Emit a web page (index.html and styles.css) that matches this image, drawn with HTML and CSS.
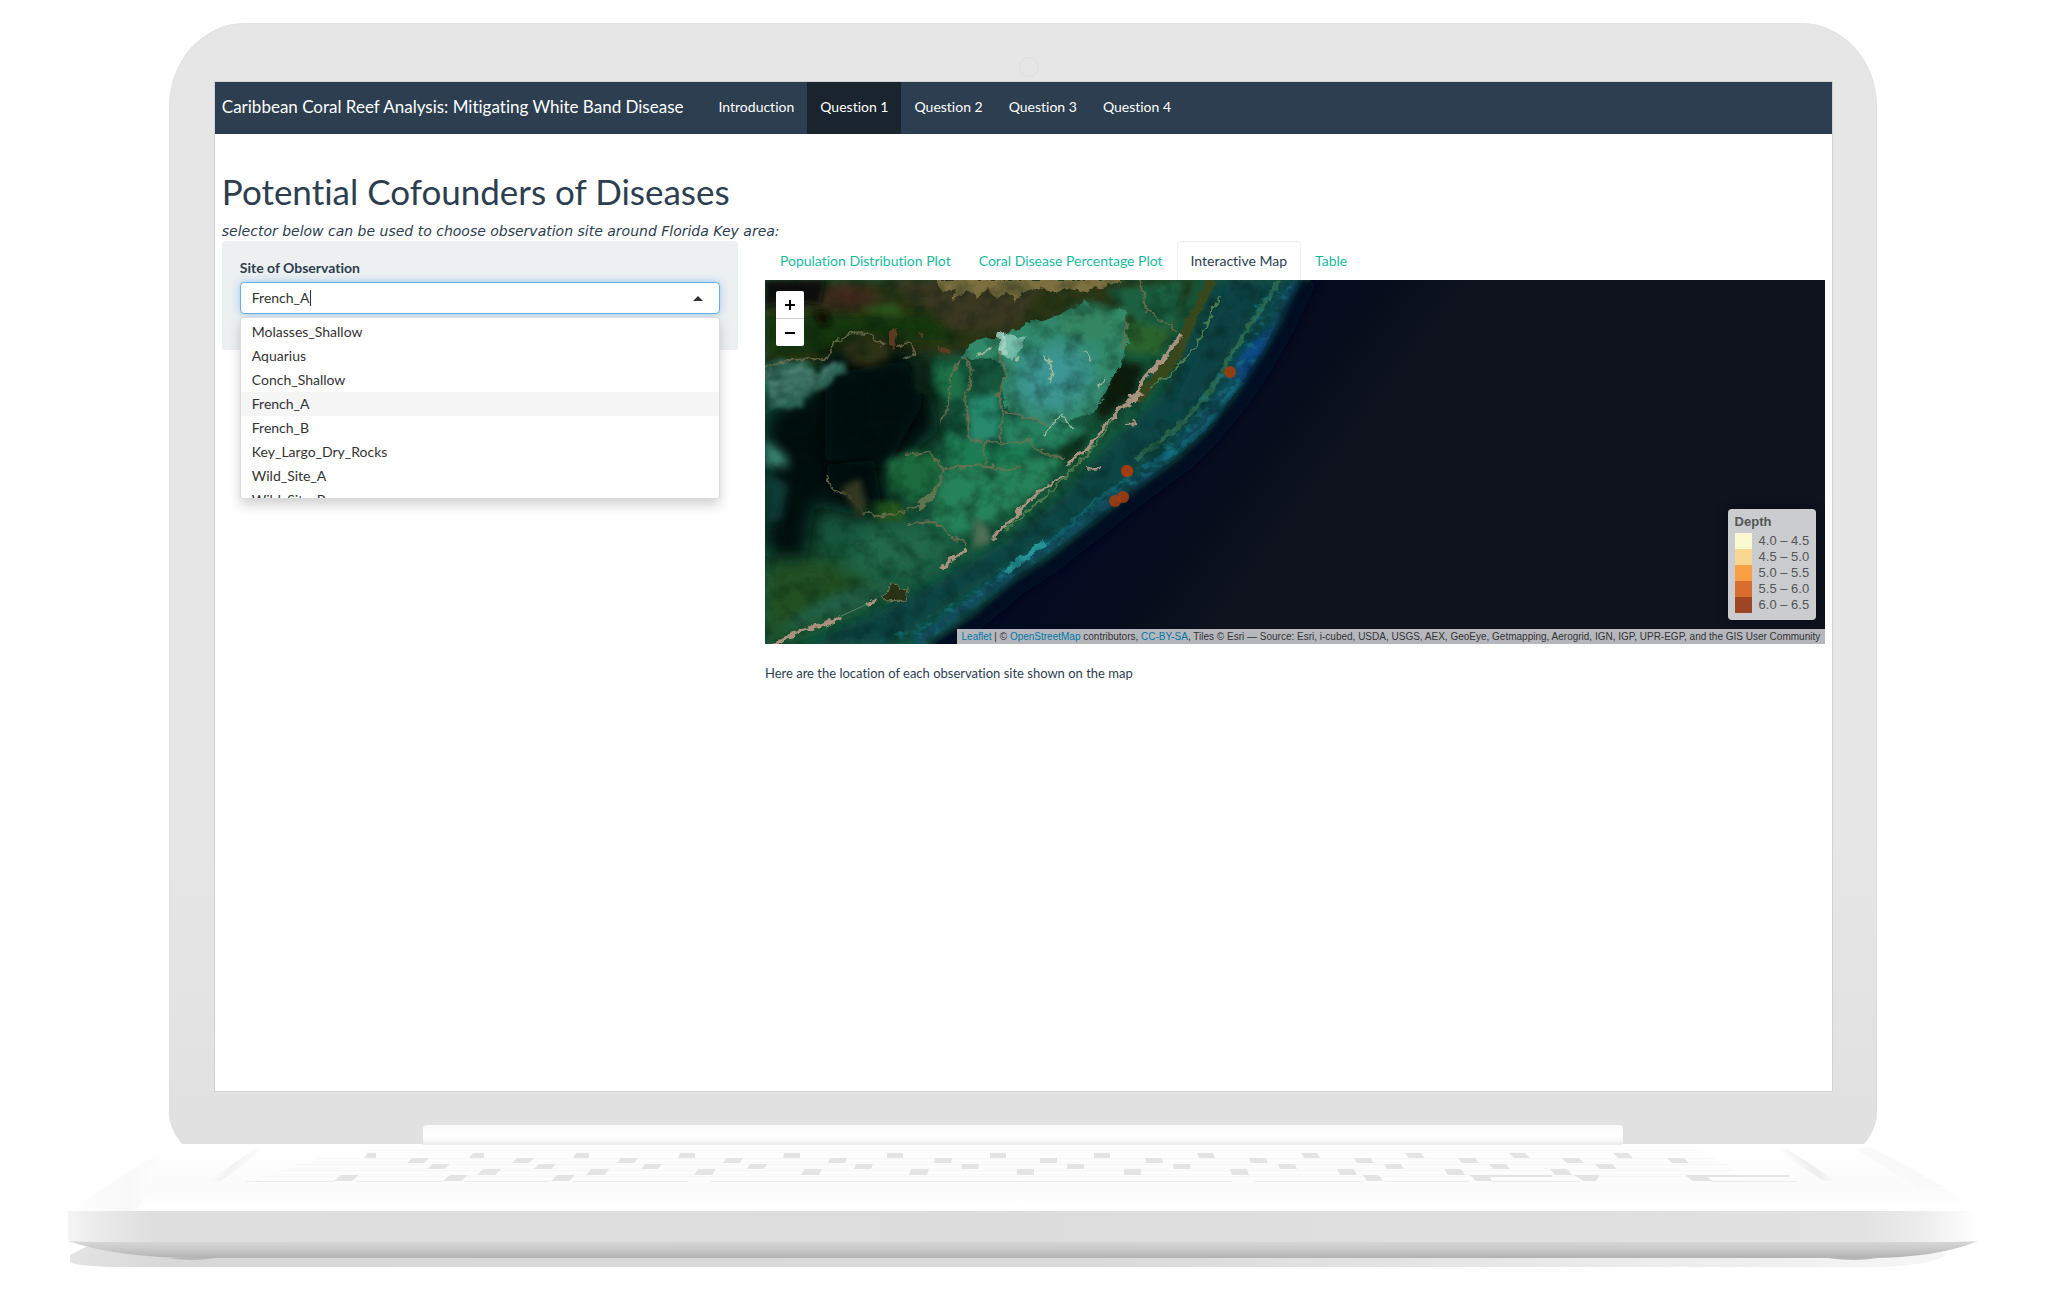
FILE: index.html
```html
<!DOCTYPE html>
<html lang="en">
<head>
<meta charset="utf-8">
<title>Caribbean Coral Reef Analysis</title>
<link rel="stylesheet" href="styles.css">
</head>
<body>
<div class="laptop">
  <div class="lid">
    <span class="camera"></span>
    <div class="screen">
      <nav class="navbar">
        <a class="brand" href="#">Caribbean Coral Reef Analysis: Mitigating White Band Disease</a>
        <a class="nav-link" href="#">Introduction</a>
        <a class="nav-link active" href="#">Question 1</a>
        <a class="nav-link" href="#">Question 2</a>
        <a class="nav-link" href="#">Question 3</a>
        <a class="nav-link" href="#">Question 4</a>
      </nav>
      <main class="content">
        <h1>Potential Cofounders of Diseases</h1>
        <p class="hint">selector below can be used to choose observation site around Florida Key area:</p>
        <div class="columns">
          <form class="well">
            <label for="site">Site of Observation</label>
            <div class="picker">
              <div class="control">
                <span class="item">French_A</span>
                <input id="site" type="text" autocomplete="off">
                <span class="arrow"></span>
              </div>
              <ul class="options">
                <li>Molasses_Shallow</li>
                <li>Aquarius</li>
                <li>Conch_Shallow</li>
                <li class="selected">French_A</li>
                <li>French_B</li>
                <li>Key_Largo_Dry_Rocks</li>
                <li>Wild_Site_A</li>
                <li>Wild_Site_B</li>
              </ul>
            </div>
          </form>
          <section class="results">
            <div class="tabs">
              <a href="#">Population Distribution Plot</a>
              <a href="#">Coral Disease Percentage Plot</a>
              <a class="active" href="#">Interactive Map</a>
              <a href="#">Table</a>
            </div>
            <div class="map">
              <svg class="tiles" viewBox="0 0 1060 364" preserveAspectRatio="xMinYMin slice" aria-hidden="true">
                <defs>
                  <filter id="b2" x="-20%" y="-20%" width="140%" height="140%"><feGaussianBlur stdDeviation="3"/></filter>
                  <filter id="b5" x="-30%" y="-30%" width="160%" height="160%"><feGaussianBlur stdDeviation="5"/></filter>
                  <filter id="b12" x="-50%" y="-50%" width="200%" height="200%"><feGaussianBlur stdDeviation="10"/></filter>
                  <filter id="rough" x="-10%" y="-10%" width="120%" height="120%">
                    <feTurbulence type="fractalNoise" baseFrequency=".12" numOctaves="3" seed="4" result="n"/>
                    <feDisplacementMap in="SourceGraphic" in2="n" scale="9" xChannelSelector="R" yChannelSelector="G"/>
                    <feGaussianBlur stdDeviation=".7"/>
                  </filter>
                  <filter id="swirl" x="-20%" y="-20%" width="140%" height="140%">
                    <feTurbulence type="fractalNoise" baseFrequency=".03" numOctaves="4" seed="9" result="n"/>
                    <feDisplacementMap in="SourceGraphic" in2="n" scale="30" xChannelSelector="R" yChannelSelector="G"/>
                    <feGaussianBlur stdDeviation="2"/>
                  </filter>
                  <filter id="mottle" x="0" y="0" width="100%" height="100%">
                    <feTurbulence type="fractalNoise" baseFrequency=".05" numOctaves="5" seed="21"/>
                    <feColorMatrix values="0 0 0 0 0  0 0 0 0 .01  0 0 0 0 .005  2.2 0 0 0 -.95"/>
                  </filter>
                  <filter id="glint" x="0" y="0" width="100%" height="100%">
                    <feTurbulence type="fractalNoise" baseFrequency=".1 .14" numOctaves="4" seed="33"/>
                    <feColorMatrix values="0 0 0 0 .01  0 0 0 0 .2  0 0 0 0 .26  0 3.4 0 0 -1.75"/>
                    <feGaussianBlur stdDeviation=".6"/>
                  </filter>
                  <linearGradient id="sea" gradientUnits="userSpaceOnUse" x1="360" y1="220" x2="480" y2="310">
                    <stop offset="0" stop-color="#040a20"/><stop offset=".5" stop-color="#080d1d"/><stop offset="1" stop-color="#0e131e"/>
                  </linearGradient>
                  <clipPath id="shelf"><path d="M0 0H545L523 42 503 78 477 117 450 150 423 180 378 213 338 244 288 283 255 303 217 335 172 364H0Z"/></clipPath>
                  <clipPath id="reef"><path d="M500 0H535L513 42 493 78 467 117 440 150 413 177 368 208 330 238 280 277 247 297 207 329 160 364H110L210 310 310 240 410 150 470 70Z"/></clipPath>
                </defs>
                <rect width="1060" height="364" fill="url(#sea)"/>
                <g clip-path="url(#shelf)">
                  <rect width="560" height="364" fill="#16563c"/>
                  <path d="M0 0H430L400 60 250 70 180 75 60 85H0Z" fill="#2b3519" filter="url(#b5)"/>
                  <path d="M0 36 80 36 170 35 190 60 100 60 60 72 0 75Z" fill="#183710" filter="url(#b5)"/>
                  <path d="M120 0H280L250 48 190 50 150 20Z" fill="#3a3822" filter="url(#b5)"/>
                  <ellipse cx="82" cy="18" rx="30" ry="13" fill="#40291a" filter="url(#b5)"/>
                  <path d="M0 0H60L55 25 20 20 0 28Z" fill="#080f08" filter="url(#b2)"/>
                  <path d="M48 32 62 30 66 44 55 46Z" fill="#090f06" filter="url(#b2)"/>
                  <path d="M95 28 130 24 140 36 110 34Z" fill="#2c541a" filter="url(#b2)"/>
                  <path d="M168 0 178 12 190 8 186 20 202 10 212 17 222 8 232 19 244 10 250 21 262 11 278 8 290 14 302 8 320 11 340 7 358 0Z" fill="#7d7040" filter="url(#rough)"/>
                  <path d="M55 76 100 60 150 75 165 110 175 150 150 170 110 195 140 230 90 235 50 225 40 290 0 275V130L50 110Z" fill="#05110c" filter="url(#b12)"/>
                  <path d="M60 95 140 80 160 120 120 190 60 180Z" fill="#060f08" filter="url(#b12)"/>
                  <path d="M60 185 110 180 116 225 70 215Z" fill="#06110a" filter="url(#b5)"/>
                  <ellipse cx="102" cy="71" rx="24" ry="15" fill="#2f3216" filter="url(#b5)"/>
                  <path d="M0 88 40 84 85 82 75 98 48 112 30 128 0 130Z" fill="#2f6656" filter="url(#swirl)"/>
                  <path d="M0 94 70 86M0 104 60 94M2 112 50 104M8 124 38 112" stroke="#6b988a" stroke-width="3" fill="none" filter="url(#swirl)" opacity=".7"/>
                  <path d="M0 158 22 176 24 188 0 186Z" fill="#39816f" filter="url(#b5)"/>
                  <path d="M0 190 24 205 16 240 0 245Z" fill="#0b3b34" filter="url(#b5)"/>
                  <path d="M0 285 70 280 120 305 80 330 0 364Z" fill="#244f20" filter="url(#b12)"/>
                  <path d="M105 245 170 250 190 275 130 300 80 290Z" fill="#22694c" filter="url(#b12)"/>
                  <path d="M60 318 130 298 110 320 40 344 10 350Z" fill="#206049" filter="url(#b5)"/>
                  <path d="M108 222 135 222 140 240 112 240Z" fill="#28581c" filter="url(#b2)"/>
                  <g filter="url(#b2)">
                    <path d="M170 85 195 85 200 115 185 120 168 105Z" fill="#1e7147"/>
                    <path d="M203 118 232 112 235 160 205 162Z" fill="#25896d"/>
                    <path d="M236 135 280 140 320 150 300 170 240 165Z" fill="#25825f"/>
                    <path d="M180 150 205 162 265 165 260 185 185 190Z" fill="#1c7b52"/>
                    <path d="M122 180 150 170 176 178 174 205 150 222 125 210Z" fill="#1a6b3e"/>
                    <path d="M180 190 250 182 300 175 280 205 230 240 190 255 165 240Z" fill="#268258"/>
                    <path d="M340 10 420 0 410 50 375 45Z" fill="#1d6040"/>
                    <path d="M320 20 362 30 358 50 330 40Z" fill="#2d7650"/>
                    <path d="M358 40 405 50 395 75 360 72Z" fill="#2a632f"/>
                    <path d="M350 80 380 85 368 115 335 142 330 125Z" fill="#071b0c"/>
                    <path d="M290 168 325 150 318 168 298 185Z" fill="#10301a"/>
                    <path d="M148 80 166 78 170 120 150 110Z" fill="#0b2412"/>
                  </g>
                  <g filter="url(#rough)">
                    <path d="M196 78 205 62 225 58 242 54 262 42 290 36 320 22 336 32 362 28 362 66 352 90 342 110 330 132 300 142 285 148 260 138 240 130 236 110 240 90 230 80Z" fill="#32896a"/>
                    <path d="M242 55 260 57 258 68 245 80 232 70Z" fill="#7cc2ae"/>
                    <path d="M232 55 240 52 242 76 235 74Z" fill="#a5d6c4"/>
                  </g>
                  <path d="M248 80 300 60 330 80 325 112 300 132 255 125Z" fill="#3c9694" filter="url(#b12)"/>
                  <path d="M310 26 355 35 345 60 290 50Z" fill="#368562" filter="url(#b5)"/>
                  <path d="M450 0H530L505 40 470 100 420 150 350 210 260 275 190 320 130 364H40L110 334 180 298 240 262 300 215 345 165 400 110Z" fill="#0e4544" filter="url(#b5)"/>
                  <path d="M465 0 500 0 480 50 440 110 400 142 440 60Z" fill="#0f4344" filter="url(#b5)"/>
                  <path d="M532 0 505 52 480 90 430 150 380 195 300 255 220 312 150 364" fill="none" stroke="#0c4a6c" stroke-width="10" filter="url(#b5)"/>
                  <path d="M510 44 485 62 470 85 478 108 498 72Z" fill="#0c4c8a" filter="url(#b2)"/>
                  <g fill="none" filter="url(#rough)">
                    <path d="M514 0 492 35 468 72 445 112 415 145 370 180" stroke="#2a674d" stroke-width="5"/>
                    <path d="M476 100 446 142 416 168 378 188" stroke="#147489" stroke-width="6" opacity=".7"/>
                    <path d="M368 194 330 222 285 262 235 292" stroke="#176d7c" stroke-width="4" opacity=".6"/>
                    <path d="M280 262 240 293" stroke="#25989a" stroke-width="6"/>
                  </g>
                  <rect width="560" height="364" filter="url(#mottle)" opacity=".42"/>
                  <g clip-path="url(#reef)"><rect width="560" height="364" filter="url(#glint)" opacity=".6"/></g>
                  <path d="M447 0 425 42 410 78 385 105 372 120" fill="none" stroke="#37471f" stroke-width="10" filter="url(#rough)"/>
                  <path d="M455 15 432 65 405 95 385 107M348 140 325 172 290 208 240 250" fill="none" stroke="#4d7b4c" stroke-width="2" filter="url(#rough)"/>
                  <g fill="none" stroke="#75704f" stroke-width="2" filter="url(#rough)" opacity=".8">
                    <path d="M0 88 25 80 60 79 70 62 85 53 105 54 118 66"/>
                    <path d="M132 66 145 62 150 75 140 80"/>
                    <path d="M200 78 208 95 200 115 202 140 205 160 240 162 265 160 270 170 300 178"/>
                    <path d="M236 72 240 95 233 115 238 133 235 160M238 132 262 138 285 146"/>
                    <path d="M140 175 165 172 178 190 200 186 218 184 240 190 255 186M218 162 220 184"/>
                    <path d="M180 188 172 210 158 222 142 232M142 244 170 242 190 258 202 265"/>
                    <path d="M60 196 66 208 90 218 97 232 112 236 140 232"/>
                    <path d="M195 78 185 100 184 125 176 142"/>
                    <path d="M375 0 380 28 394 40 412 52"/>
                    <path d="M361 40 358 70"/>
                  </g>
                  <path d="M156 220 172 206 168 220 150 232Z" fill="#61744f" filter="url(#rough)"/>
                  <path d="M124 52 132 50 130 70 124 64ZM150 55 158 53 158 58ZM170 66 186 70 180 76Z" fill="#5d3b20" filter="url(#rough)"/>
                  <g fill="none" stroke="#9ab79b" stroke-width="2" filter="url(#rough)">
                    <path d="M252 75 253 82M280 75 287 90 284 104M280 155 290 140 296 134 306 146 308 148M212 76 227 68M320 70 326 82M334 108 340 98"/>
                  </g>
                  <g fill="none" stroke="#a8937f" filter="url(#rough)">
                    <path d="M416 54 404 70 397 82 386 90 375 103 372 118 357 127" stroke-width="4"/>
                    <path d="M396 80 386 92M374 112 366 120" stroke-width="7"/>
                    <path d="M357 127 342 143 323 167 307 180 303 188" stroke-width="3"/>
                    <path d="M326 165 318 172" stroke-width="6"/>
                    <path d="M298 196 277 210 262 223 247 239 227 259" stroke-width="3"/>
                    <path d="M203 268 190 278 175 288" stroke-width="3"/>
                    <path d="M102 324 112 320M76 336 60 345 40 349 24 357 6 366" stroke-width="4"/>
                    <path d="M360 145 370 144 368 139M320 190 335 188" stroke-width="2"/>
                  </g>
                  <path d="M210 238 222 246 226 262 208 268Z" fill="#4f6f56" filter="url(#b2)"/>
                  <path d="M75 208 95 198 102 225 95 240 85 222Z" fill="#303821" filter="url(#b2)"/>
                  <path d="M116 316 128 304 142 310 140 320 122 321Z" fill="#2b3217" stroke="#76764f" filter="url(#rough)"/>
                  <path d="M102 324 76 336" stroke="#5e8074"/>
                </g>
                <path d="M544 0 522 46 502 82 476 121 448 155 420 183 375 216 336 247 286 286 252 308 214 340 170 370" fill="none" stroke="#040b24" stroke-width="16" filter="url(#b2)"/>
                <g fill="#a83c0c" fill-opacity=".85">
                  <circle cx="465" cy="92" r="6"/><circle cx="362" cy="191" r="6"/><circle cx="362" cy="191" r="6"/><circle cx="358" cy="217" r="6"/><circle cx="350" cy="221" r="6"/>
                </g>
              </svg>
              <div class="zoom">
                <button type="button" aria-label="Zoom in"><svg viewBox="0 0 12 12"><path d="M6 1V11M1 6H11"/></svg></button>
                <button type="button" aria-label="Zoom out"><svg viewBox="0 0 12 12"><path d="M1 6H11"/></svg></button>
              </div>
              <div class="legend">
                <strong>Depth</strong>
                <ul>
                  <li><i class="d1"></i>4.0 – 4.5</li>
                  <li><i class="d2"></i>4.5 – 5.0</li>
                  <li><i class="d3"></i>5.0 – 5.5</li>
                  <li><i class="d4"></i>5.5 – 6.0</li>
                  <li><i class="d5"></i>6.0 – 6.5</li>
                </ul>
              </div>
              <div class="attribution"><a href="#">Leaflet</a> | © <a href="#">OpenStreetMap</a> contributors, <a href="#">CC-BY-SA</a>, Tiles © Esri — Source: Esri, i-cubed, USDA, USGS, AEX, GeoEye, Getmapping, Aerogrid, IGN, IGP, UPR-EGP, and the GIS User Community</div>
            </div>
            <p class="caption">Here are the location of each observation site shown on the map</p>
          </section>
        </div>
      </main>
    </div>
  </div>
  <svg class="base" viewBox="0 0 1910 142" aria-hidden="true">
    <defs>
      <linearGradient id="deck" x1="0" x2="0" y1="0" y2="1"><stop offset="0" stop-color="#fff"/><stop offset=".65" stop-color="#fbfbfb"/><stop offset="1" stop-color="#fff"/></linearGradient>
      <linearGradient id="hinge" x1="0" x2="0" y1="0" y2="1"><stop offset="0" stop-color="#fafafa"/><stop offset=".5" stop-color="#fff"/><stop offset=".75" stop-color="#fafafa"/><stop offset="1" stop-color="#ebebeb"/></linearGradient>
      <linearGradient id="front"><stop offset="0" stop-color="#f5f5f5"/><stop offset=".02" stop-color="#e8e8e8"/><stop offset=".045" stop-color="#dedede"/><stop offset=".5" stop-color="#dcdcdc"/><stop offset=".94" stop-color="#e2e2e2"/><stop offset=".97" stop-color="#ececec"/><stop offset="1" stop-color="#fff"/></linearGradient>
      <linearGradient id="under" x1="0" x2="0" y1="0" y2="1"><stop offset="0" stop-color="#d8d8d8"/><stop offset=".5" stop-color="#c8c8c8"/><stop offset="1" stop-color="#b2b2b2"/></linearGradient>
      <linearGradient id="shadow"><stop offset="0" stop-color="#e4e4e4"/><stop offset=".05" stop-color="#d8d8d8"/><stop offset=".55" stop-color="#dadada"/><stop offset="1" stop-color="#f6f6f6"/></linearGradient>
      <linearGradient id="wingl" x1="0" x2="1"><stop offset="0" stop-color="#fff"/><stop offset=".6" stop-color="#f8f8f8"/><stop offset="1" stop-color="#fff"/></linearGradient>
      <linearGradient id="slotl" x1="0" y1="0" x2="1" y2=".4"><stop offset=".3" stop-color="#fff"/><stop offset=".55" stop-color="#f2f2f2"/><stop offset=".8" stop-color="#fff"/></linearGradient>
      <linearGradient id="slotr" x1="1" y1="0" x2="0" y2=".4"><stop offset=".3" stop-color="#fff"/><stop offset=".55" stop-color="#eee"/><stop offset=".8" stop-color="#fff"/></linearGradient>
      <linearGradient id="keyrow" x1="0" x2="0" y1="0" y2="1"><stop offset="0" stop-color="#f5f5f5"/><stop offset=".5" stop-color="#fff"/><stop offset="1" stop-color="#f8f8f8"/></linearGradient>
    </defs>
    <path d="M2 130 25 118H1860L1878 130Q1860 142 1800 142H60Q10 142 2 137Z" fill="url(#shadow)"/>
    <path d="M101 19H1809L1910 86H0Z" fill="url(#deck)"/>
    <path d="M101 22 0 86H68L102 24Z" fill="url(#wingl)"/>
    <path d="M1802 22 1876 62 1850 62 1788 24Z" fill="#f9f9f9"/>
    <path d="M187 24 140 56H152L200 24Z" fill="url(#slotl)"/>
    <path d="M1719 24 1769 56H1756L1706 24Z" fill="url(#slotr)"/>
    <g fill="url(#keyrow)">
      <path d="M298 25H1630L1635 28H294Z"/><path d="M250 33H1645L1652 38H243Z"/><path d="M228 39H1658L1663 44H221Z"/><path d="M212 45H1664L1672 50H205Z"/><path d="M194 51H1674L1680 56H185Z"/>
    </g>
    <path d="M178 56.500H266M288 56.500H375M396 56.500H482M505 56.500H620M642 56.500H1164M1186 56.500H1295M1317 56.500H1402M1424 56.500H1512M1643 56.500H1730" stroke="#ededed" fill="none"/>
    <g fill="#e4e4e4">
      <path d="M300 28h8v5h-12zM405 28h11v5h-15zM508 28h13v5h-16zM612 28h15v5h-17zM716 28h16v5h-17zM819 28h16v5h-16zM922 28h16v5h-16zM1026 28h16v5h-16zM1129 28h16l2 5h-16zM1233 28h16l3 5h-16zM1337 28h16l4 5h-16zM1441 28h16l5 5h-16zM1545 28h15l5 5h-15z"/>
      <path d="M344 33h17l-5 5h-17zM449 33h17l-5 5h-17zM553 33h17l-4 5h-17zM658 33h17l-3 5h-17zM762 33h17l-2 5h-17zM867 33h17l-1 5h-17zM972 33h17v5h-17zM1077 33h17l1 5h-17zM1181 33h17l2 5h-17zM1286 33h17l3 5h-17zM1390 33h17l4 5h-17zM1494 33h17l5 5h-17zM1599 33h17l5 5h-17z"/>
      <path d="M365 39h17l-6 5h-17zM471 39h17l-5 5h-17zM577 39h17l-4 5h-17zM682 39h17l-3 5h-17zM788 39h17l-2 5h-17zM894 39h17l-1 5h-17zM999 39h17v5h-17zM1105 39h17l1 5h-17zM1210 39h17l2 5h-17zM1316 39h17l3 5h-17zM1421 39h17l4 5h-17zM1527 39h17l5 5h-17z"/>
      <path d="M415 44h18l-6 6h-18zM523 44h18l-5 6h-18zM630 44h18l-4 6h-18zM736 44h18l-3 6h-18zM843 44h18l-2 6h-18zM949 44h17v6h-17zM1056 44h17v6h-17zM1162 44h17l2 6h-17zM1269 44h17l3 6h-17zM1376 44h17l4 6h-17zM1482 44h17l5 6h-17z"/>
      <path d="M273 50h18l-7 6h-18zM382 50h18l-7 6h-18zM489 50h18l-6 6h-18zM1295 50h16l4 6h-16zM1402 50h82v2h-62l2 4h-16zM1505 50h27l-4 6h-12zM1617 50h104v2h-82l6 4h-20z"/>
    </g>
    <path d="M355 20V3Q355 0 360 0H1550Q1555 0 1555 3V20Z" fill="url(#hinge)"/>
    <path d="M0 86H1910V117H0Z" fill="url(#front)"/>
    <path d="M0 116Q8 117 50 117H1860Q1900 117 1910 116 1870 133 1800 133H130Q50 133 0 116Z" fill="url(#under)"/>
    <path d="M100 133H148Q124 137 100 133ZM1760 133H1810Q1786 137 1760 133Z" fill="#b8b8b8"/>
  </svg>
</div>
</body>
</html>
```
FILE: styles.css
```css
* { box-sizing: border-box; }

body {
  margin: 0;
  padding: 23px 0;
  background: #fff;
  color: #2c3e50;
  font: 14px/20px Lato, sans-serif;
  font-variant-ligatures: none;
}

h1, p, ul { margin: 0; padding: 0; font-weight: 400; }
ul { list-style: none; }
a { text-decoration: none; }

/* Laptop frame */
.laptop { display: flex; flex-direction: column; align-items: center; }

.lid {
  position: relative;
  width: 83.5%;
  padding: 59px 45px 98px 46px;
  border-radius: 76px 76px 145px 145px / 84px 84px 77px 77px;
  background: linear-gradient(#e6e6e6 70%, #e0e0e0);
  box-shadow: inset 0 0 2px #dadada;
}

.camera {
  position: absolute;
  top: 34px;
  left: calc(50% - 4px);
  width: 20px;
  height: 20px;
  border: 1px solid #dedede;
  border-radius: 50%;
}

.screen {
  aspect-ratio: 1617 / 1009;
  background: #fff;
  box-shadow: 0 0 0 1px #d2d2d2;
}

.base { display: block; width: 93.35%; margin-top: -64px; position: relative; }

/* Navigation */
.navbar {
  display: flex;
  height: 52px;
  background: #2c3e50;
  line-height: 50px;
}

.navbar a { color: #fff; }
.brand { padding: 0 22px 0 7px; font-size: 17px; }
.nav-link { padding: 0 13px; }
.nav-link.active { background: #1a242f; }

/* Page */
.content { padding: 37px 7px 0; }
h1 { margin-bottom: 10px; font-size: 35px; line-height: 40px; }
.hint { font-family: "DejaVu Sans", sans-serif; font-style: italic; }
.columns { display: grid; grid-template-columns: 516fr 1060fr; gap: 27px; align-items: start; }

.well {
  padding: 17px 18px 36px;
  border-radius: 4px;
  background: #ecf0f1;
}

.well label { display: block; margin-bottom: 4px; font-weight: 700; }
.picker { position: relative; color: #333; }

.control {
  display: flex;
  align-items: center;
  height: 32px;
  padding: 0 16px 0 11px;
  border: 1px solid #66afe9;
  border-radius: 4px;
  background: #fff;
  box-shadow: 0 0 8px rgba(102, 175, 233, .6);
}

.control input {
  flex: 1;
  min-width: 0;
  height: 16px;
  padding: 0;
  border: 0;
  border-left: 1px solid #333;
  outline: 0;
  background: none;
  font: inherit;
}

.arrow {
  border: 5px solid transparent;
  border-top: 0;
  border-bottom-color: #333;
}

.options {
  position: absolute;
  top: 35px;
  left: 0;
  right: 0;
  z-index: 2;
  height: 182px;
  overflow: hidden;
  padding-top: 2px;
  border: 1px solid #d9dcde;
  border-radius: 3px;
  background: #fff;
  box-shadow: 0 6px 12px rgba(0, 0, 0, .18);
}

.options li { padding: 0 11px; line-height: 24px; }
.options .selected { background: #f5f5f5; }

.tabs { display: flex; padding-left: 1px; }

.tabs a {
  padding: 9px 13px;
  border: 1px solid transparent;
  border-bottom: 0;
  border-radius: 4px 4px 0 0;
  color: #18bc9c;
}

.tabs .active { border-color: #ecf0f1; color: #2c3e50; }

/* Map */
.map {
  position: relative;
  height: 364px;
  overflow: hidden;
  background: #0e131e;
  font-family: "Liberation Sans", sans-serif;
}

.tiles { display: block; width: 100%; height: 100%; }

.zoom {
  position: absolute;
  top: 11px;
  left: 11px;
  width: 28px;
  border-radius: 2px;
  overflow: hidden;
}

.zoom button {
  display: flex;
  align-items: center;
  justify-content: center;
  width: 100%;
  height: 27px;
  padding: 0;
  border: 0;
  background: #fff;
}

.zoom button + button { height: 28px; border-top: 1px solid #ccc; }
.zoom svg { width: 12px; height: 12px; fill: none; stroke: #000; stroke-width: 2; }

.legend {
  position: absolute;
  right: 9px;
  bottom: 24px;
  padding: 4px 7px 7px;
  border-radius: 4px;
  background: #cbcccf;
  box-shadow: 0 0 12px rgba(0, 0, 0, .4);
  color: #555;
  font-size: 13px;
  line-height: 16px;
}

.legend strong { display: block; padding-bottom: 2px; line-height: 18px; }
.legend li { display: flex; gap: 7px; }
.legend i { width: 17px; height: 16px; }
.d1 { background: #fafad2; }
.d2 { background: #f9d792; }
.d3 { background: #f99f44; }
.d4 { background: #d96d2f; }
.d5 { background: #9e4524; }

.attribution {
  position: absolute;
  right: 0;
  bottom: 0;
  padding: 0 5px;
  background: #b6b7bc;
  color: #333;
  font-size: 10px;
  line-height: 15px;
  white-space: nowrap;
}

.attribution a { color: #0078a8; }
.caption { margin-top: 19px; font-size: 13px; }
```
